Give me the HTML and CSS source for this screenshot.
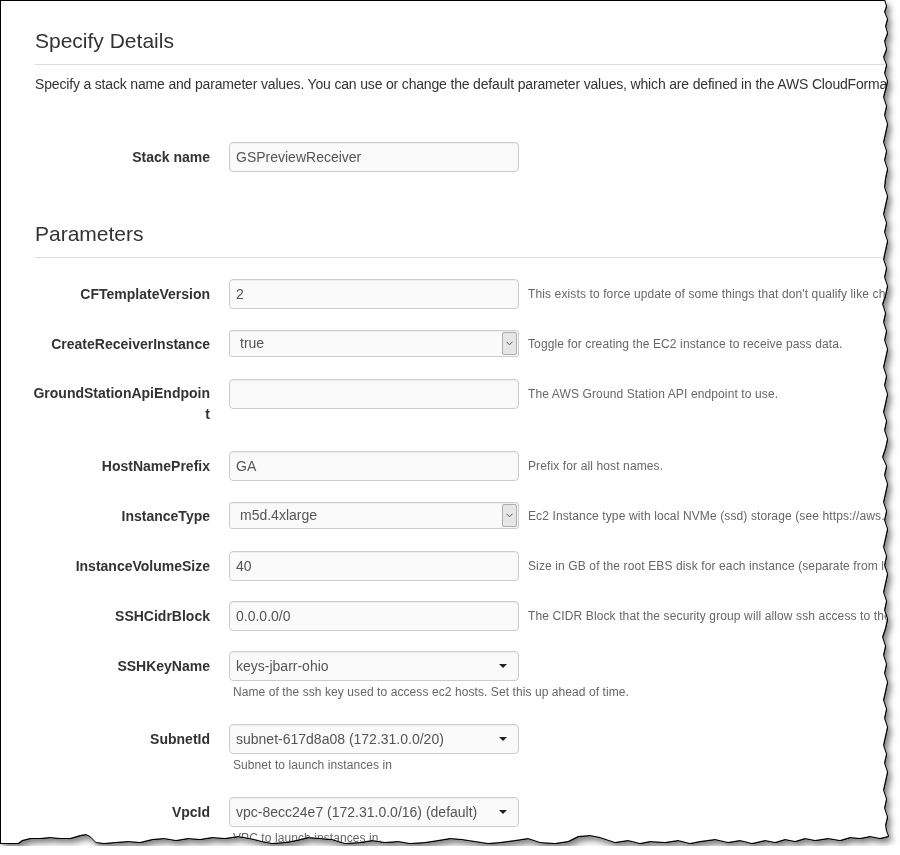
FILE: index.html
```html
<!DOCTYPE html>
<html lang="en">
<head>
  <meta charset="UTF-8">
  <title>Specify Details</title>
  <link rel="stylesheet" href="styles.css">
</head>
<body>
  <div class="frame">
    <div class="sheet">
      <h2 class="section-title">Specify Details</h2>
      <p class="intro">Specify a stack name and parameter values. You can use or change the default parameter values, which are defined in the AWS CloudFormation template.</p>

      <div class="form-row stack-row">
        <label class="field-label">Stack name</label>
        <div class="control">
          <div class="field">GSPreviewReceiver</div>
        </div>
      </div>

      <h2 class="section-title params-title">Parameters</h2>

      <div class="params">
        <div class="form-row">
          <label class="field-label">CFTemplateVersion</label>
          <div class="control"><div class="field">2</div></div>
          <div class="hint">This exists to force update of some things that don't qualify like changes</div>
        </div>

        <div class="form-row">
          <label class="field-label">CreateReceiverInstance</label>
          <div class="control">
            <div class="field native-select">
              <span class="value">true</span>
              <span class="chevron-box">
                <svg width="7" height="5" viewBox="0 0 7 5"><polyline points="0.5,0.8 3.5,3.8 6.5,0.8" fill="none" stroke="#555" stroke-width="1"/></svg>
              </span>
            </div>
          </div>
          <div class="hint">Toggle for creating the EC2 instance to receive pass data.</div>
        </div>

        <div class="form-row">
          <label class="field-label tall">GroundStationApiEndpoint</label>
          <div class="control"><div class="field"></div></div>
          <div class="hint">The AWS Ground Station API endpoint to use.</div>
        </div>

        <div class="form-row">
          <label class="field-label">HostNamePrefix</label>
          <div class="control"><div class="field">GA</div></div>
          <div class="hint">Prefix for all host names.</div>
        </div>

        <div class="form-row">
          <label class="field-label">InstanceType</label>
          <div class="control">
            <div class="field native-select">
              <span class="value">m5d.4xlarge</span>
              <span class="chevron-box">
                <svg width="7" height="5" viewBox="0 0 7 5"><polyline points="0.5,0.8 3.5,3.8 6.5,0.8" fill="none" stroke="#555" stroke-width="1"/></svg>
              </span>
            </div>
          </div>
          <div class="hint">Ec2 Instance type with local NVMe (ssd) storage (see https://aws.amazon.com/ec2/instance-types/)</div>
        </div>

        <div class="form-row">
          <label class="field-label">InstanceVolumeSize</label>
          <div class="control"><div class="field">40</div></div>
          <div class="hint">Size in GB of the root EBS disk for each instance (separate from local NVMe storage)</div>
        </div>

        <div class="form-row">
          <label class="field-label">SSHCidrBlock</label>
          <div class="control"><div class="field">0.0.0.0/0</div></div>
          <div class="hint">The CIDR Block that the security group will allow ssh access to the instances</div>
        </div>

        <div class="form-row">
          <label class="field-label">SSHKeyName</label>
          <div class="control">
            <div class="field dropdown"><span class="value">keys-jbarr-ohio</span><span class="caret"></span></div>
            <div class="hint-below">Name of the ssh key used to access ec2 hosts. Set this up ahead of time.</div>
          </div>
        </div>

        <div class="form-row">
          <label class="field-label">SubnetId</label>
          <div class="control">
            <div class="field dropdown"><span class="value">subnet-617d8a08 (172.31.0.0/20)</span><span class="caret"></span></div>
            <div class="hint-below">Subnet to launch instances in</div>
          </div>
        </div>

        <div class="form-row">
          <label class="field-label">VpcId</label>
          <div class="control">
            <div class="field dropdown"><span class="value">vpc-8ecc24e7 (172.31.0.0/16) (default)</span><span class="caret"></span></div>
            <div class="hint-below">VPC to launch instances in.</div>
          </div>
        </div>
      </div>
    </div>
  </div>
</body>
</html>
```

FILE: styles.css
```css
/* Reset */
* { box-sizing: border-box; margin: 0; padding: 0; }
html, body {
  background: #fff;
  font-family: "Liberation Sans", Arial, sans-serif;
  color: #333;
  overflow: hidden;
}

/* Torn-paper screenshot frame: outline + soft shadow follow the clipped sheet */
.frame {
  width: 890px;
  height: 846px;
  filter: drop-shadow(1px 0 0 #000) drop-shadow(0 1px 0 #000) drop-shadow(3px 4px 3px rgba(0, 0, 0, .5));
}
.sheet {
  width: 100%;
  height: 100%;
  background: #fff;
  border-left: 1px solid #000;
  border-top: 1px solid #000;
  padding-left: 34px;
  overflow: hidden;
  clip-path: polygon(
    0 0, 884px 0, 886px 6px, 884px 12px, 887px 19px, 885px 26px, 887px 33px, 884px 41px,
    886px 49px, 883px 57px, 886px 65px, 884px 73px, 887px 81px, 885px 89px, 883px 97px,
    886px 106px, 884px 115px, 887px 124px, 885px 133px, 883px 142px, 886px 151px, 884px 160px,
    887px 169px, 885px 178px, 884px 187px, 887px 196px, 885px 205px, 883px 214px, 886px 223px,
    884px 232px, 887px 241px, 885px 250px, 883px 259px, 886px 268px, 884px 277px, 887px 286px,
    885px 295px, 882px 304px, 885px 313px, 883px 322px, 886px 331px, 884px 340px, 887px 349px,
    885px 358px, 883px 367px, 886px 376px, 884px 385px, 887px 394px, 885px 403px, 883px 412px,
    886px 421px, 884px 430px, 887px 439px, 885px 448px, 882px 457px, 886px 466px, 884px 475px,
    887px 484px, 885px 493px, 883px 502px, 886px 511px, 884px 520px, 887px 529px, 885px 538px,
    883px 547px, 886px 556px, 884px 565px, 887px 574px, 885px 583px, 883px 592px, 886px 601px,
    884px 610px, 887px 619px, 885px 628px, 882px 637px, 885px 646px, 883px 655px, 886px 664px,
    884px 673px, 887px 682px, 885px 691px, 883px 700px, 886px 709px, 884px 718px, 887px 727px,
    885px 736px, 883px 745px, 886px 754px, 884px 763px, 887px 772px, 885px 781px, 883px 790px,
    886px 799px, 884px 808px, 887px 817px, 885px 825px, 886px 831px, 888px 836px,
    880px 838px, 870px 836px, 860px 838px, 850px 837px, 840px 840px, 828px 838px, 815px 840px,
    805px 838px, 795px 841px, 785px 839px, 775px 842px, 765px 840px, 752px 843px, 740px 840px,
    728px 842px, 715px 839px, 700px 841px, 690px 843px, 678px 840px, 665px 842px, 650px 841px,
    640px 843px, 628px 840px, 615px 842px, 600px 837px, 590px 835px, 578px 836px, 568px 841px,
    555px 843px, 540px 842px, 528px 838px, 515px 840px, 500px 842px, 488px 843px, 475px 841px,
    462px 839px, 450px 838px, 438px 840px, 425px 842px, 410px 843px, 398px 841px, 385px 842px,
    372px 840px, 360px 842px, 345px 843px, 332px 839px, 320px 838px, 308px 837px, 296px 840px,
    285px 842px, 272px 843px, 262px 841px, 250px 838px, 238px 836px, 225px 838px, 212px 837px,
    200px 839px, 188px 838px, 176px 840px, 164px 838px, 152px 839px, 140px 842px, 128px 841px,
    115px 842px, 104px 843px, 96px 842px, 90px 836px, 86px 834px, 80px 835px, 70px 838px,
    60px 838px, 50px 837px, 40px 838px, 30px 838px, 22px 840px, 18px 843px, 0 843px
  );
}

/* Section headings with rule */
.section-title {
  margin-top: 28px;
  padding-bottom: 11px;
  font-size: 21px;
  line-height: 24px;
  font-weight: normal;
  color: #333;
  border-bottom: 1px solid #ddd;
}
.params-title { margin-top: 50px; }

.intro {
  margin-top: 9px;
  font-size: 14px;
  line-height: 20px;
  letter-spacing: -0.17px;
  white-space: nowrap;
}

.stack-row { margin-top: 48px; }
.params { margin-top: 21px; }

/* Form rows: label | control | hint */
.form-row {
  display: flex;
  align-items: flex-start;
  margin-bottom: 20px;
}
.field-label {
  flex: none;
  width: 178px;
  margin-left: -3px;
  padding: 5px 0 4px;
  text-align: right;
  font-size: 14px;
  line-height: 21px;
  font-weight: bold;
  color: #333;
  word-break: break-all;
}
.field-label.tall { padding: 4px 0 6px; }

.control {
  flex: none;
  width: 290px;
  margin-left: 19px;
}

.hint {
  margin-left: 9px;
  font-size: 12px;
  line-height: 30px;
  letter-spacing: 0.12px;
  color: #666;
  white-space: nowrap;
}
.hint-below {
  margin-top: 1px;
  padding: 0 0 2px 4px;
  font-size: 12px;
  line-height: 20px;
  letter-spacing: 0.08px;
  color: #666;
  white-space: nowrap;
}

/* Text fields */
.field {
  height: 30px;
  padding: 0 6px;
  border: 1px solid #ccc;
  border-radius: 4px;
  background: #fafafa;
  box-shadow: inset 0 1px 1px rgba(0, 0, 0, .05);
  font-size: 14px;
  line-height: 28px;
  color: #555;
  white-space: nowrap;
}

/* Windows-style select with chevron button */
.native-select {
  display: flex;
  align-items: center;
  height: 27px;
  margin-top: 1px;
  padding: 0 1px 0 10px;
  border-radius: 3px;
  line-height: 25px;
}
.native-select .value { flex: 1; }
.chevron-box {
  display: flex;
  align-items: center;
  justify-content: center;
  width: 15px;
  height: 23px;
  background: #e6e6e6;
  border: 1px solid #adadad;
  border-radius: 2px;
}

/* Bootstrap-style dropdown */
.dropdown {
  display: flex;
  align-items: center;
  justify-content: space-between;
  padding-right: 11px;
}
.caret {
  width: 0;
  height: 0;
  border-top: 4px solid #222;
  border-left: 4px solid transparent;
  border-right: 4px solid transparent;
}
```
